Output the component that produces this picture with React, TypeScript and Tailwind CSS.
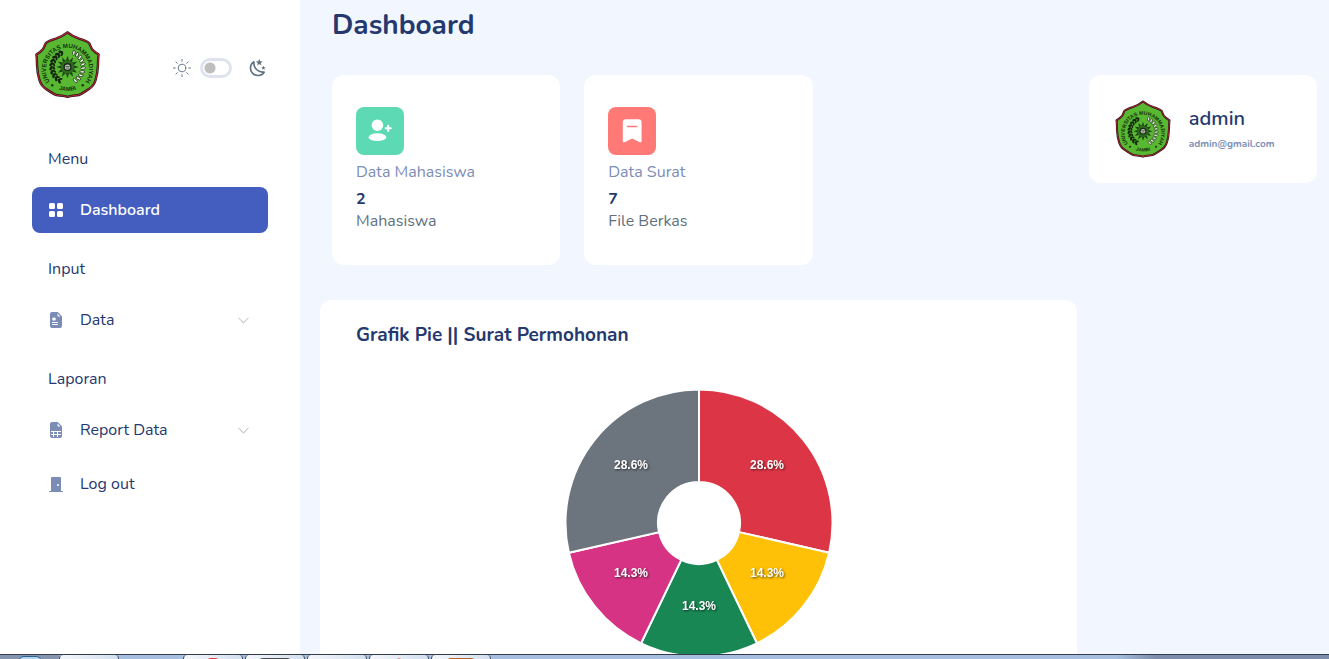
import type { ReactNode } from "react";
import {
  BsChevronDown,
  BsDoorClosedFill,
  BsFileEarmarkMedicalFill,
  BsFileEarmarkSpreadsheetFill,
  BsGridFill,
} from "react-icons/bs";

function CampusLogo({ id, className }: { id: string; className: string }) {
  const rays = Array.from({ length: 12 }, (_, i) => i * 30);
  const leaves = Array.from({ length: 10 }, (_, i) => 24 + i * 14);
  return (
    <svg viewBox="1 0 64 67" className={className} role="img" aria-label="Universitas Muhammadiyah Jambi">
      <defs>
        <path id={id + "-top"} d="M14.7 49 A21.2 21.2 0 1 1 51.3 49" />
        <path id={id + "-bottom"} d="M17 54 A26 26 0 0 0 49 54" />
      </defs>
      <path
        d="M33 1.8 C30 4.4 26 6.4 21.5 8 C17 9.4 13.4 10.6 11.6 12.6 C10.4 14.6 10.2 16.6 8.8 18.4 C7 20.6 4.6 22.2 2.4 23.6 C3 27 2.8 30 3 34 C3.2 39.6 4 44.6 5.4 49 C6.6 52.8 9 56 12.4 58 C16 60.2 18.6 62.4 22 63.6 C26 64.2 30 64.2 33 65.4 C36 64.2 40 64.2 44 63.6 C47.4 62.4 50 60.2 53.6 58 C57 56 59.4 52.8 60.6 49 C62 44.6 62.8 39.6 63 34 C63.2 30 63 27 63.6 23.6 C61.4 22.2 59 20.6 57.2 18.4 C55.8 16.6 55.6 14.6 54.4 12.6 C52.6 10.6 49 9.4 44.5 8 C40 6.4 36 4.4 33 1.8 Z"
        fill="#58b832"
        stroke="#34151a"
        strokeWidth="2.4"
        strokeLinejoin="round"
      />
      <path
        d="M33 1.8 C30 4.4 26 6.4 21.5 8 C17 9.4 13.4 10.6 11.6 12.6 C10.4 14.6 10.2 16.6 8.8 18.4 C7 20.6 4.6 22.2 2.4 23.6 C3 27 2.8 30 3 34 C3.2 39.6 4 44.6 5.4 49 C6.6 52.8 9 56 12.4 58 C16 60.2 18.6 62.4 22 63.6 C26 64.2 30 64.2 33 65.4 C36 64.2 40 64.2 44 63.6 C47.4 62.4 50 60.2 53.6 58 C57 56 59.4 52.8 60.6 49 C62 44.6 62.8 39.6 63 34 C63.2 30 63 27 63.6 23.6 C61.4 22.2 59 20.6 57.2 18.4 C55.8 16.6 55.6 14.6 54.4 12.6 C52.6 10.6 49 9.4 44.5 8 C40 6.4 36 4.4 33 1.8 Z"
        fill="none"
        stroke="#b5283a"
        strokeWidth="1"
      />
      {leaves.map((a) => (
        <g key={a}>
          <ellipse cx="33" cy="19.8" rx="2.5" ry="1.3" fill="#15240f" transform={`rotate(${-a} 33 36) rotate(35 33 19.8)`} />
          <ellipse cx="33" cy="22.4" rx="2" ry="1" fill="#15240f" transform={`rotate(${-a} 33 36) rotate(-35 33 22.4)`} />
          <ellipse cx="33" cy="20.6" rx="2.5" ry="1.2" fill="#f4f7f0" stroke="#15240f" strokeWidth="0.7" transform={`rotate(${a} 33 36) rotate(75 33 20.6)`} />
        </g>
      ))}
      {rays.map((a) => (
        <path key={a} d="M33 25 L35 31 H31 Z" fill="#1f4316" transform={`rotate(${a} 33 36)`} />
      ))}
      <circle cx="33" cy="36" r="6.6" fill="#2c6a1d" />
      <circle cx="33" cy="36" r="4" fill="#1c2b19" />
      <circle cx="33" cy="36" r="2.6" fill="#c8d3c4" />
      <path d="M31 35.4 h4 M31.6 37 h3" stroke="#222" strokeWidth="0.7" />
      <text fontSize="6" fontWeight="700" fill="#16300e" fontFamily="Liberation Sans, sans-serif">
        <textPath href={`#${id}-top`} startOffset="50%" textAnchor="middle">UNIVERSITAS MUHAMMADIYAH</textPath>
      </text>
      <text fontSize="5.6" fontWeight="700" fill="#16300e" fontFamily="Liberation Sans, sans-serif">
        <textPath href={`#${id}-bottom`} startOffset="50%" textAnchor="middle">JAMBI</textPath>
      </text>
      <circle cx="18" cy="54" r="1.2" fill="#16300e" />
      <circle cx="48" cy="54" r="1.2" fill="#16300e" />
    </svg>
  );
}

function SunIcon() {
  return (
    <svg viewBox="0 0 21 21" className="size-5" fill="none" stroke="currentColor" strokeLinecap="round" strokeLinejoin="round" aria-hidden="true">
      <circle cx="10.5" cy="10.5" r="4" />
      <path d="M4.136 4.136 5.55 5.55m9.9 9.9 1.414 1.414M1.5 10.5h2m14 0h2M4.135 16.863 5.55 15.45m9.899-9.9 1.414-1.415M10.5 19.5v-2m0-14v-2" />
    </svg>
  );
}

function MoonIcon() {
  return (
    <svg viewBox="0 0 24 24" className="size-5" fill="currentColor" aria-hidden="true">
      <path d="m17.75 4.09l-2.53 1.94l.91 3.06l-2.63-1.81l-2.63 1.81l.91-3.06l-2.53-1.94L12.44 4l1.06-3l1.06 3l3.19.09m3.5 6.91l-1.64 1.25l.59 1.98l-1.7-1.17l-1.7 1.17l.59-1.98L15.75 11l2.06-.05L18.5 9l.69 1.95l2.06.05m-2.28 4.95c.83-.08 1.72 1.1 1.19 1.85c-.32.45-.66.87-1.08 1.27C15.17 23 8.84 23 4.94 19.07c-3.91-3.9-3.91-10.24 0-14.14c.4-.4.82-.76 1.27-1.08c.75-.53 1.93.36 1.85 1.19c-.27 2.86.69 5.83 2.89 8.02a9.96 9.96 0 0 0 8.02 2.89m-1.64 2.02a12.08 12.08 0 0 1-7.8-3.47c-2.17-2.19-3.33-5-3.49-7.82c-2.81 3.14-2.7 7.96.31 10.98c3.02 3.01 7.84 3.12 10.98.31Z" />
    </svg>
  );
}

function AddUserIcon() {
  return (
    <svg viewBox="0 0 24 24" className="size-6" fill="#fff" aria-hidden="true">
      <circle cx="9.4" cy="6.2" r="5.8" />
      <ellipse cx="9.4" cy="18.2" rx="8.8" ry="3.9" />
      <path d="M20.2 6.7v5.2M17.6 9.3h5.2" stroke="#fff" strokeWidth="2" strokeLinecap="round" />
    </svg>
  );
}

function BookmarkIcon() {
  return (
    <svg viewBox="0 0 24 24" className="size-6" aria-hidden="true">
      <path d="M6 .3h12.4a3.2 3.2 0 0 1 3.2 3.2v18.7c0 1.1-1 1.4-1.9 1l-7.5-3.7-7.5 3.7c-.9.4-1.9.1-1.9-1V3.5A3.2 3.2 0 0 1 6 .3Z" fill="#fff" />
      <path d="M7.4 7.5h9.4" stroke="#ff7976" strokeWidth="1.3" strokeLinecap="round" />
    </svg>
  );
}

type ItemProps = { icon: ReactNode; label: string; active?: boolean; expandable?: boolean };

function MenuItem({ icon, label, active, expandable }: ItemProps) {
  const tone = active ? "bg-[#435ebe] font-semibold text-white" : "text-[#25396f]";
  const iconTone = active ? "text-white" : "text-[#7c8db5]";
  return (
    <a href="#" className={`flex h-[46px] items-center gap-4 rounded-lg px-4 ${tone}`}>
      <span className={iconTone}>{icon}</span>
      <span className="flex-1">{label}</span>
      {expandable && <BsChevronDown className="mr-0.5 size-[13px] text-[#bbbbbb]" />}
    </a>
  );
}

function StatCard({ icon, tone, title, value, unit }: { icon: ReactNode; tone: string; title: string; value: string; unit: string }) {
  return (
    <section className="rounded-xl bg-white px-6 py-8">
      <div className={`flex size-12 items-center justify-center rounded-lg ${tone}`}>{icon}</div>
      <h2 className="mt-1 leading-[26px] text-[#7c8db5]">{title}</h2>
      <p className="mt-1 leading-5 font-bold text-[#25396f]">{value}</p>
      <p className="leading-6 text-[#607080]">{unit}</p>
    </section>
  );
}

const slices = [
  { share: 2, color: "#dc3545", label: "28.6%" },
  { share: 1, color: "#ffc107", label: "14.3%" },
  { share: 1, color: "#198754", label: "14.3%" },
  { share: 1, color: "#d63384", label: "14.3%" },
  { share: 2, color: "#6c757d", label: "28.6%" },
];

function point(radius: number, turn: number) {
  const a = turn * 2 * Math.PI;
  return [141 + radius * Math.sin(a), 140 - radius * Math.cos(a)];
}

function DonutChart() {
  const total = slices.reduce((sum, s) => sum + s.share, 0);
  let start = 0;
  const arcs = slices.map((s) => {
    const from = start / total;
    const to = (start + s.share) / total;
    start += s.share;
    const [x1, y1] = point(133.5, from);
    const [x2, y2] = point(133.5, to);
    const [x3, y3] = point(41, to);
    const [x4, y4] = point(41, from);
    const [lx, ly] = point(87, (from + to) / 2);
    return { ...s, lx, ly, d: `M${x1} ${y1}A133.5 133.5 0 0 1 ${x2} ${y2}L${x3} ${y3}A41 41 0 0 0 ${x4} ${y4}Z` };
  });
  return (
    <svg viewBox="0 0 280 280" className="size-[280px]" role="img" aria-label="Grafik Pie Surat Permohonan">
      {arcs.map((s, i) => (
        <path key={i} d={s.d} fill={s.color} stroke="#fff" strokeWidth="2" />
      ))}
      {arcs.map((s, i) => (
        <text
          key={i}
          x={s.lx}
          y={s.ly}
          textAnchor="middle"
          className="fill-white font-['Liberation_Sans',sans-serif] text-xs font-bold drop-shadow-[1px_1px_1px_rgba(0,0,0,0.6)]"
        >
          {s.label}
        </text>
      ))}
    </svg>
  );
}

function Taskbar() {
  const tabs = ["", "", "bg-[#e03c35]", "bg-[#4a4a4a]", "", "bg-[#f08a8a]", "bg-[#b5622a]"];
  const widths = ["w-3", "w-3", "w-3", "w-8", "w-3", "w-1", "w-7"];
  return (
    <footer className="flex h-[5px] shrink-0 overflow-hidden border-t border-[#353c4a] bg-linear-to-r from-[#a6bfe0] from-84% to-[#7d8dab] to-87%">
      <div className="flex w-[59px] justify-center bg-[#8494ae]">
        <span className="mt-px h-3 w-6 rounded-full border border-[#2a6496] bg-[#b9d3e8]" />
      </div>
      {tabs.map((mark, i) => (
        <div
          key={i}
          className={`mr-0.5 flex w-15 justify-center rounded-t-sm border-x border-[#3d4a60] bg-linear-to-r from-[#f4f6fb] to-[#d3dfef] pt-[3px] ${i === 1 ? "invisible" : ""}`}
        >
          <span className={`h-1 rounded-t-full ${widths[i]} ${mark}`} />
        </div>
      ))}
    </footer>
  );
}

export default function App() {
  return (
    <div className="flex h-screen flex-col overflow-hidden bg-[#f2f7ff] font-['Nunito','Open_Sans',sans-serif] text-base">
      <div className="flex min-h-0 flex-1">
        <aside className="w-[300px] shrink-0 bg-white px-8 pt-[30px]">
          <div className="flex items-center justify-between">
            <a href="#" className="ml-[3px]">
              <CampusLogo id="side" className="h-[69px] w-[65px]" />
            </a>
            <div className="flex items-center gap-2 pt-1.5 text-[#607080]">
              <SunIcon />
              <input
                type="checkbox"
                role="switch"
                aria-label="Dark mode"
                className="h-5 w-8 appearance-none rounded-full border-3 border-[#dfe3ee] bg-white bg-[radial-gradient(circle_at_7px_7px,#bfbfbf_5px,transparent_6px)]"
              />
              <span className="ml-2">
                <MoonIcon />
              </span>
            </div>
          </div>
          <nav className="mt-12 text-[#25396f]">
            <h2 className="mb-4 px-4 leading-6">Menu</h2>
            <MenuItem active icon={<BsGridFill />} label="Dashboard" />
            <h2 className="mt-6 mb-4 px-4 leading-6">Input</h2>
            <MenuItem expandable icon={<BsFileEarmarkMedicalFill />} label="Data" />
            <h2 className="mt-6 mb-4 px-4 leading-6">Laporan</h2>
            <MenuItem expandable icon={<BsFileEarmarkSpreadsheetFill />} label="Report Data" />
            <div className="mt-2">
              <MenuItem icon={<BsDoorClosedFill />} label="Log out" />
            </div>
          </nav>
        </aside>
        <main className="min-w-0 flex-1 overflow-hidden pl-5">
          <h1 className="px-3 pt-[7px] text-[28px] leading-9 font-bold text-[#25396f]">Dashboard</h1>
          <div className="mt-8 grid grid-cols-4 items-start">
            <div className="col-span-3">
              <div className="grid grid-cols-3 gap-6 px-3">
                <StatCard icon={<AddUserIcon />} tone="bg-[#5ddab4]" title="Data Mahasiswa" value="2" unit="Mahasiswa" />
                <StatCard icon={<BookmarkIcon />} tone="bg-[#ff7976]" title="Data Surat" value="7" unit="File Berkas" />
              </div>
              <section className="mt-[35px] rounded-xl bg-white px-9 pt-[23px] pb-8">
                <h2 className="text-[19px] leading-6 font-bold text-[#25396f]">Grafik Pie || Surat Permohonan</h2>
                <div className="mt-9 flex justify-center">
                  <DonutChart />
                </div>
              </section>
            </div>
            <section className="mx-3 flex items-center gap-4 rounded-xl bg-white p-6">
              <CampusLogo id="user" className="h-15 w-15 px-0.5 py-px" />
              <div>
                <h2 className="text-xl leading-[26px] font-semibold text-[#25396f]">admin</h2>
                <p className="mt-1 text-[10px] leading-4 font-bold text-[#7c8db5]">admin@gmail.com</p>
              </div>
            </section>
          </div>
        </main>
      </div>
      <Taskbar />
    </div>
  );
}
